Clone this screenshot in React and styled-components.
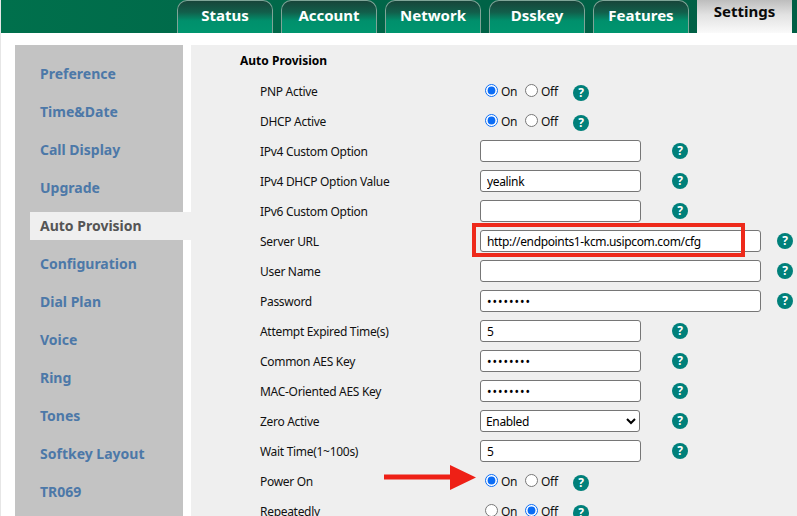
import React from 'react';
import styled, { createGlobalStyle } from 'styled-components';

const Global = createGlobalStyle`
  html, body {
    margin: 0;
    padding: 0;
    background: #ffffff;
  }
`;

const Page = styled.div`
  position: relative;
  width: 797px;
  height: 516px;
  overflow: hidden;
  background: #ffffff;
  border-left: 1px solid #e6e6e6;
  box-sizing: border-box;
  font-family: "Noto Sans", "Open Sans", sans-serif;
`;

const Header = styled.div`
  display: flex;
  gap: 8px;
  height: 33px;
  padding-left: 176px;
  background: linear-gradient(90deg, #00704c 0%, #006347 60%, #005f45 100%);
`;

const Tab = styled.div`
  box-sizing: border-box;
  width: ${(p) => (p.$active ? '95px' : '96px')};
  height: 33px;
  display: flex;
  justify-content: center;
  align-items: ${(p) => (p.$active ? 'flex-start' : 'center')};
  padding-top: ${(p) => (p.$active ? '1px' : '0')};
  padding-bottom: ${(p) => (p.$active ? '0' : '5px')};
  font-size: 15px;
  font-weight: 700;
  color: ${(p) => (p.$active ? '#0a0a0a' : '#ffffff')};
  border-radius: ${(p) => (p.$active ? '0' : '10px 10px 0 0')};
  border: ${(p) => (p.$active ? '0' : '1px solid #7fa598')};
  border-bottom: 0;
  background: ${(p) =>
    p.$active
      ? 'linear-gradient(180deg, #bdbdbd 0%, #e2e2e2 45%, #fafafa 100%)'
      : 'linear-gradient(180deg, #17453a 0%, #125f4b 35%, #00906c 62%, #00966f 100%)'};
`;

const Body = styled.div`
  display: flex;
  gap: 8px;
  padding: 12px 0 0 14px;
`;

const Sidebar = styled.div`
  box-sizing: border-box;
  width: 168px;
  height: 480px;
  flex: none;
  padding: 10px 0 0 15px;
  background: #c3c3c3;
`;

const SideItem = styled.div`
  height: 38px;
  display: flex;
  align-items: center;
`;

const SideLabel = styled.div`
  box-sizing: border-box;
  width: 161px;
  margin-right: -8px;
  height: 28px;
  line-height: 27px;
  padding-left: 10px;
  font-size: 14px;
  font-weight: 700;
  color: ${(p) => (p.$active ? '#555555' : '#4c78a8')};
  background: ${(p) => (p.$active ? '#efefef' : 'transparent')};
`;

const Panel = styled.div`
  flex: 1;
  height: 480px;
  background: #efefef;
  padding-left: 49px;
`;

const Title = styled.div`
  height: 31px;
  line-height: 32px;
  font-size: 12px;
  font-weight: 700;
  color: #000000;
`;

const Row = styled.div`
  display: flex;
  align-items: center;
  height: 30px;
  padding-left: 20px;
`;

const Label = styled.div`
  width: 220px;
  flex: none;
  font-size: 12px;
  letter-spacing: -0.3px;
  color: #111111;
`;

const Field = styled.input`
  box-sizing: border-box;
  width: ${(p) => (p.$wide ? '281px' : '161px')};
  height: 22px;
  margin: 0;
  padding: 0 6px;
  font-family: "Noto Sans", sans-serif;
  font-size: 12px;
  letter-spacing: ${(p) => (p.type === 'password' ? '1px' : '-0.35px')};
  color: #000000;
  background: #ffffff;
  border: 1px solid #767676;
  border-radius: 3px;
  outline: none;
`;

const Select = styled.select`
  box-sizing: border-box;
  width: 160px;
  height: 22px;
  margin: 0;
  padding: 0 1px;
  font-family: "Noto Sans", sans-serif;
  font-size: 12px;
  letter-spacing: -0.35px;
  color: #000000;
  background: #ffffff;
  border: 1px solid #767676;
  border-radius: 3px;
`;

const Radios = styled.div`
  display: flex;
  align-items: center;
  width: 93px;
  padding-left: 5px;
  box-sizing: border-box;
`;

const Radio = styled.input`
  width: 13px;
  height: 13px;
  margin: 0 3px 2px 0;
  accent-color: #0a6cf5;
`;

const RadioText = styled.span`
  width: ${(p) => (p.$off ? '16px' : '24px')};
  font-size: 12px;
  letter-spacing: -0.3px;
  color: #111111;
`;

const Help = styled.span`
  flex: none;
  width: 16px;
  height: 16px;
  margin-left: ${(p) => p.$gap}px;
  margin-top: ${(p) => (p.$low ? '4px' : '0')};
  border-radius: 50%;
  background: #00807a;
  color: #ffffff;
  font-size: 12px;
  font-weight: 700;
  line-height: 16px;
  text-align: center;
`;

const RedBox = styled.div`
  position: absolute;
  left: 471px;
  top: 223px;
  width: 273px;
  height: 34px;
  box-sizing: border-box;
  border: 4px solid #ee2a1b;
`;

const Arrow = styled.svg`
  position: absolute;
  left: 382px;
  top: 464px;
`;

const menu = [
  'Preference',
  'Time&Date',
  'Call Display',
  'Upgrade',
  'Auto Provision',
  'Configuration',
  'Dial Plan',
  'Voice',
  'Ring',
  'Tones',
  'Softkey Layout',
  'TR069',
];

const tabs = ['Status', 'Account', 'Network', 'Dsskey', 'Features', 'Settings'];

const rows = [
  { label: 'PNP Active', type: 'radio', on: true },
  { label: 'DHCP Active', type: 'radio', on: true },
  { label: 'IPv4 Custom Option', type: 'text', value: '' },
  { label: 'IPv4 DHCP Option Value', type: 'text', value: 'yealink' },
  { label: 'IPv6 Custom Option', type: 'text', value: '' },
  { label: 'Server URL', type: 'text', wide: true, value: 'http://endpoints1-kcm.usipcom.com/cfg' },
  { label: 'User Name', type: 'text', wide: true, value: '' },
  { label: 'Password', type: 'password', wide: true, value: '12345678' },
  { label: 'Attempt Expired Time(s)', type: 'text', value: '5' },
  { label: 'Common AES Key', type: 'password', value: '12345678' },
  { label: 'MAC-Oriented AES Key', type: 'password', value: '12345678' },
  { label: 'Zero Active', type: 'select' },
  { label: 'Wait Time(1~100s)', type: 'text', value: '5' },
  { label: 'Power On', type: 'radio', on: true },
  { label: 'Repeatedly', type: 'radio', on: false },
];

function RowControl({ row }) {
  if (row.type === 'radio') {
    return (
      <>
        <Radios>
          <Radio type="radio" name={row.label} defaultChecked={row.on} />
          <RadioText>On</RadioText>
          <Radio type="radio" name={row.label} defaultChecked={!row.on} />
          <RadioText $off>Off</RadioText>
        </Radios>
        <Help $gap={0} $low>?</Help>
      </>
    );
  }
  if (row.type === 'select') {
    return (
      <>
        <Select defaultValue="Enabled">
          <option>Enabled</option>
          <option>Disabled</option>
        </Select>
        <Help $gap={32}>?</Help>
      </>
    );
  }
  return (
    <>
      <Field type={row.type} $wide={row.wide} defaultValue={row.value} />
      <Help $gap={row.wide ? 16 : 31}>?</Help>
    </>
  );
}

export default function App() {
  return (
    <Page>
      <Global />
      <Header>
        {tabs.map((t) => (
          <Tab key={t} $active={t === 'Settings'}>{t}</Tab>
        ))}
      </Header>
      <Body>
        <Sidebar>
          {menu.map((m) => (
            <SideItem key={m}>
              <SideLabel $active={m === 'Auto Provision'}>{m}</SideLabel>
            </SideItem>
          ))}
        </Sidebar>
        <Panel>
          <Title>Auto Provision</Title>
          {rows.map((r) => (
            <Row key={r.label}>
              <Label>{r.label}</Label>
              <RowControl row={r} />
            </Row>
          ))}
        </Panel>
      </Body>
      <RedBox />
      <Arrow width="94" height="28" viewBox="0 0 94 28">
        <path d="M1 10.5 L67 10.5 L67 1 L93 13.5 L67 26 L67 15.5 L1 15.5 Z" fill="#ee2016" />
      </Arrow>
    </Page>
  );
}
